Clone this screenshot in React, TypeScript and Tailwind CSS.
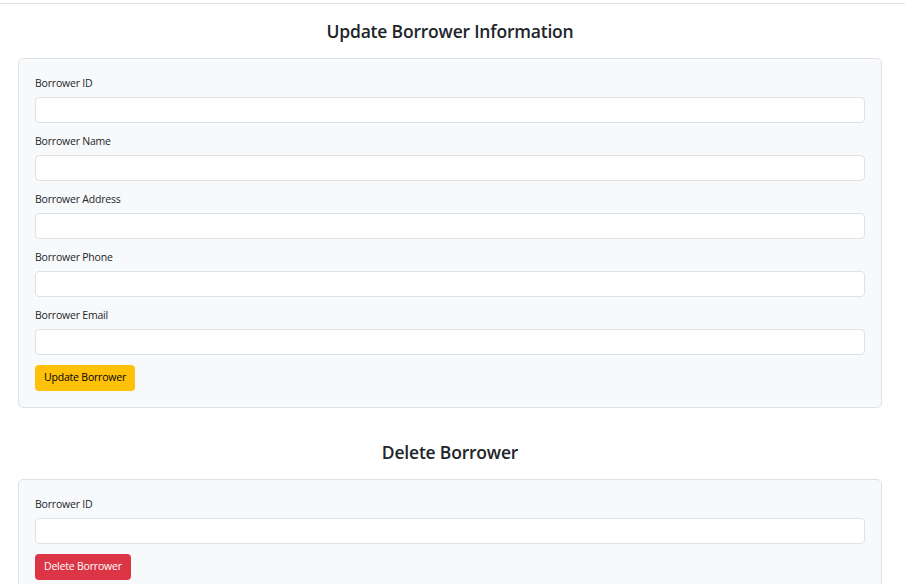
import React from 'react';

interface Field {
  label: string;
  name: string;
}

const updateFields: Field[] = [
  { label: 'Borrower ID', name: 'id' },
  { label: 'Borrower Name', name: 'name' },
  { label: 'Borrower Address', name: 'address' },
  { label: 'Borrower Phone', name: 'phone' },
  { label: 'Borrower Email', name: 'email' },
];

const FormField: React.FC<{ field: Field }> = ({ field }) => (
  <div className="mb-[10px]">
    <label
      htmlFor={field.name}
      className="block text-[10.5px] tracking-[-0.2px] leading-[16px] text-[#212529] mb-[6px]"
    >
      {field.label}
    </label>
    <input
      id={field.name}
      type="text"
      className="block w-full h-[26px] bg-white border border-[#dee2e6] rounded-[4px] px-2 text-[11px] focus:outline-none"
    />
  </div>
);

const App: React.FC = () => {
  return (
    <div className="min-h-screen bg-white text-[#212529]" style={{ fontFamily: '"Open Sans", sans-serif' }}>
      <div className="pt-[3px]">
        <div className="border-t border-[#dee2e6]" />
      </div>

      <div className="ml-[18px] mr-[23px]">
        <h2 className="text-center text-[17.5px] tracking-[-0.2px] leading-[24px] font-semibold mt-[15px] mb-[15px]">
          Update Borrower Information
        </h2>
        <form className="bg-[#f8f9fa] border border-[#dee2e6] rounded-[5px] p-4">
          {updateFields.map((f) => (
            <FormField key={f.name} field={f} />
          ))}
          <button
            type="button"
            className="block h-[26px] px-[9px] bg-[#ffc107] rounded-[4px] text-[10.5px] tracking-[-0.2px] text-black"
          >
            Update Borrower
          </button>
        </form>

        <h2 className="text-center text-[17.5px] tracking-[-0.2px] leading-[24px] font-semibold mt-[32px] mb-[15px]">
          Delete Borrower
        </h2>
        <form className="bg-[#f8f9fa] border border-[#dee2e6] rounded-[5px] p-4">
          <FormField field={{ label: 'Borrower ID', name: 'deleteId' }} />
          <button
            type="button"
            className="block h-[26px] px-[9px] bg-[#dc3545] rounded-[4px] text-[10.5px] tracking-[-0.2px] text-white"
          >
            Delete Borrower
          </button>
        </form>
      </div>
    </div>
  );
};

export default App;
